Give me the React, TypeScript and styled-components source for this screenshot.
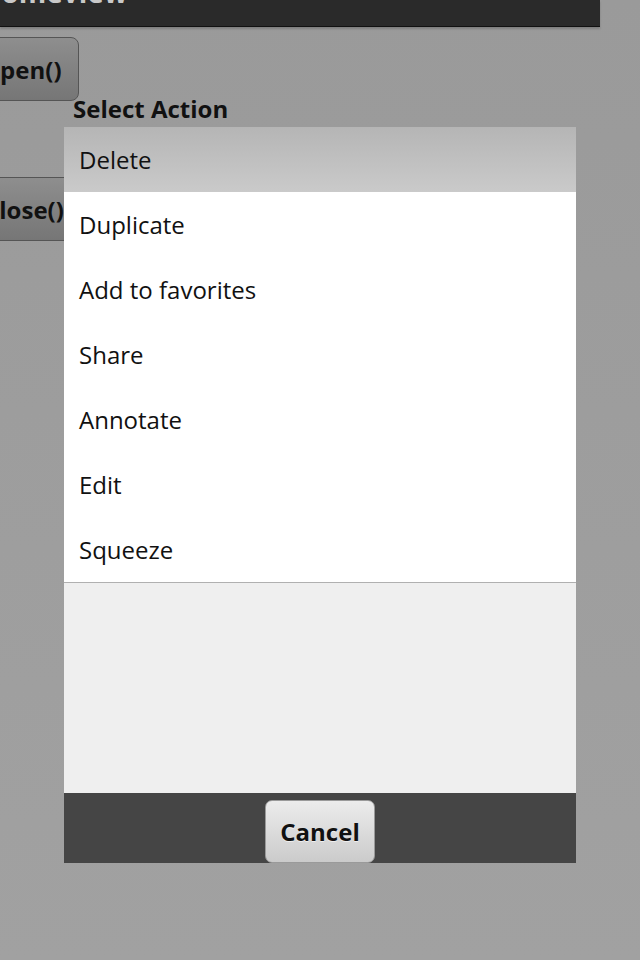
import React from "react";
import styled, { createGlobalStyle } from "styled-components";

const Global = createGlobalStyle`
  html, body { margin: 0; padding: 0; }
  body {
    background: #9a9a9a;
    font-family: "Open Sans", "Noto Sans", sans-serif;
    overflow: hidden;
  }
`;

const Page = styled.div`
  position: relative;
  width: 640px;
  height: 960px;
  overflow: hidden;
  background: linear-gradient(#9a9a9a, #a1a1a1);
`;

const Header = styled.div`
  width: 600px;
  height: 26px;
  background: #2a2a2a;
  border-bottom: 1px solid #111;
  box-shadow: 0 2px 2px rgba(0, 0, 0, 0.18);
  overflow: hidden;
`;

const HeaderTitle = styled.div`
  margin: -26px 0 0 -20px;
  font-size: 28px;
  font-weight: 700;
  line-height: 36px;
  color: #c8c8c8;
`;

const Buttons = styled.div`
  display: flex;
  flex-direction: column;
  align-items: flex-start;
  gap: 76px;
  padding-top: 10px;
`;

const PageButton = styled.div<{ $shift: number }>`
  box-sizing: border-box;
  height: 64px;
  margin-left: ${(p) => p.$shift}px;
  padding: 0 16px;
  display: flex;
  align-items: center;
  font-size: 24px;
  font-weight: 700;
  color: #111;
  border: 1px solid #555;
  border-radius: 8px;
  background: linear-gradient(#8e8e8e, #767676);
  white-space: nowrap;
`;

const Dialog = styled.div`
  position: absolute;
  left: 64px;
  top: 91px;
  width: 512px;
  display: flex;
  flex-direction: column;
`;

const Title = styled.div`
  height: 36px;
  line-height: 36px;
  padding-left: 9px;
  font-size: 24px;
  font-weight: 700;
  color: #111;
`;

const List = styled.div`
  background: #fff;
  display: flex;
  flex-direction: column;
  border-bottom: 1px solid #b0b0b0;
`;

const Item = styled.div<{ $active?: boolean }>`
  height: 65px;
  line-height: 65px;
  padding-left: 15px;
  font-size: 24px;
  color: #111;
  background: ${(p) => (p.$active ? "linear-gradient(#b5b5b5, #cacaca)" : "#fff")};
`;

const Filler = styled.div`
  height: 210px;
  background: #efefef;
`;

const Footer = styled.div`
  height: 70px;
  background: #454545;
  display: flex;
  justify-content: center;
  padding-top: 7px;
  box-sizing: border-box;
`;

const CancelButton = styled.div`
  box-sizing: border-box;
  width: 110px;
  height: 63px;
  display: flex;
  align-items: center;
  justify-content: center;
  font-size: 24px;
  font-weight: 700;
  color: #111;
  text-shadow: 0 1px 0 rgba(255, 255, 255, 0.6);
  border: 1px solid #9a9a9a;
  border-radius: 7px;
  background: linear-gradient(#ececec, #cbcbcb);
`;

const actions = ["Delete", "Duplicate", "Add to favorites", "Share", "Annotate", "Edit", "Squeeze"];

export default function App() {
  return (
    <Page>
      <Global />
      <Header>
        <HeaderTitle>Homeview</HeaderTitle>
      </Header>
      <Buttons>
        <PageButton $shift={-36}>Open()</PageButton>
        <PageButton $shift={-33}>Close()</PageButton>
      </Buttons>
      <Dialog>
        <Title>Select Action</Title>
        <List>
          {actions.map((a, i) => (
            <Item key={a} $active={i === 0}>
              {a}
            </Item>
          ))}
        </List>
        <Filler />
        <Footer>
          <CancelButton>Cancel</CancelButton>
        </Footer>
      </Dialog>
    </Page>
  );
}
